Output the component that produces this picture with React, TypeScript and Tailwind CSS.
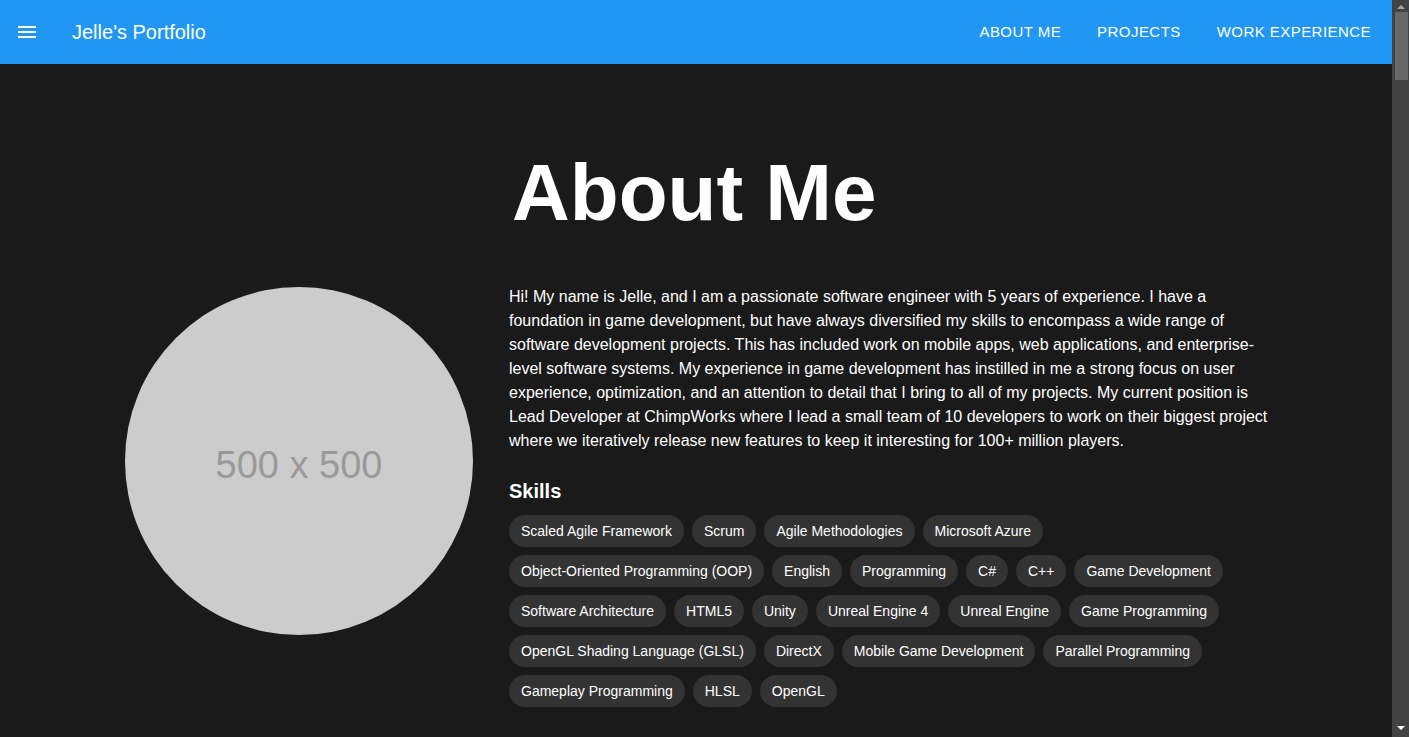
import React from 'react';

const skills = [
    'Scaled Agile Framework',
    'Scrum',
    'Agile Methodologies',
    'Microsoft Azure',
    'Object-Oriented Programming (OOP)',
    'English',
    'Programming',
    'C#',
    'C++',
    'Game Development',
    'Software Architecture',
    'HTML5',
    'Unity',
    'Unreal Engine 4',
    'Unreal Engine',
    'Game Programming',
    'OpenGL Shading Language (GLSL)',
    'DirectX',
    'Mobile Game Development',
    'Parallel Programming',
    'Gameplay Programming',
    'HLSL',
    'OpenGL',
];

const navItems = ['About Me', 'Projects', 'Work Experience'];

const MenuIcon = () => (
    <svg viewBox="0 0 24 24" className="h-6 w-6" fill="currentColor">
        <path d="M3 18h18v-2H3zm0-5h18v-2H3zm0-7v2h18V6z" />
    </svg>
);

// Dark window scrollbar, as the browser draws it next to the page
const ScrollBar = () => (
    <div className="flex h-screen w-[17px] shrink-0 flex-col items-center bg-[#424242]">
        <svg viewBox="0 0 8 4" className="mt-[5px] h-[4px] w-[8px]" fill="#a3a3a3">
            <polygon points="0,4 4,0 8,4" />
        </svg>
        <div className="mt-[3px] ml-[1px] h-[68px] w-[13px] bg-[#686868]" />
        <svg viewBox="0 0 8 4" className="mt-auto mb-[7px] h-[4px] w-[8px]" fill="#ffffff">
            <polygon points="0,0 8,0 4,4" />
        </svg>
    </div>
);

const App = () => {
    return (
        <div className="flex h-screen bg-[#1a1a1a] text-white font-['Liberation_Sans',Arial,sans-serif]">
            <div className="min-w-0 flex-1 overflow-y-auto">
                {/* App bar */}
                <header className="sticky top-0 z-10 flex h-16 items-center bg-[#2196f3] pl-[15px] pr-[10px] text-white">
                    <button className="flex items-center text-white">
                        <MenuIcon />
                    </button>
                    <span className="ml-[33px] text-[20px] leading-none">Jelle's Portfolio</span>
                    <nav className="ml-auto flex items-center gap-[14px]">
                        {navItems.map((item) => (
                            <a
                                key={item}
                                href={`#${item.toLowerCase().replace(' ', '-')}`}
                                className="px-[11px] py-2 text-[15px] uppercase tracking-[0.03em] text-white"
                            >
                                {item}
                            </a>
                        ))}
                    </nav>
                </header>

                {/* About section */}
                <section id="about-me" className="mx-auto flex w-[1152px] pt-[81px] pb-16">
                    <div className="flex w-[358px] shrink-0 justify-center pt-[142px]">
                        <div className="flex h-[348px] w-[348px] items-center justify-center rounded-full bg-[#cccccc]">
                            <span className="mt-2 text-[38px] text-[#999999]">500 x 500</span>
                        </div>
                    </div>
                    <div className="ml-[31px] w-[763px]">
                        <h1 className="ml-[3px] text-[80px] font-bold leading-[96px]">About Me</h1>
                        <p className="mt-[44px] text-[16px] leading-6">
                            Hi! My name is Jelle, and I am a passionate software engineer with 5 years of experience. I have a
                            foundation in game development, but have always diversified my skills to encompass a wide range of
                            software development projects. This has included work on mobile apps, web applications, and
                            enterprise-level software systems. My experience in game development has instilled in me a strong
                            focus on user experience, optimization, and an attention to detail that I bring to all of my
                            projects. My current position is Lead Developer at ChimpWorks where I lead a small team of 10
                            developers to work on their biggest project where we iteratively release new features to keep it
                            interesting for 100+ million players.
                        </p>
                        <h2 className="mt-[22px] text-[20px] font-bold leading-8">Skills</h2>
                        <div className="mt-2 flex flex-wrap gap-2">
                            {skills.map((skill) => (
                                <span
                                    key={skill}
                                    className="flex h-8 items-center rounded-full bg-[#333333] px-3 text-[14px] text-white"
                                >
                                    {skill}
                                </span>
                            ))}
                        </div>
                    </div>
                </section>

                {/* Rest of the page */}
                <section id="projects" className="min-h-[3400px]" />
                <section id="work-experience" className="min-h-[3400px]" />
            </div>
            <ScrollBar />
        </div>
    );
};

export default App;
